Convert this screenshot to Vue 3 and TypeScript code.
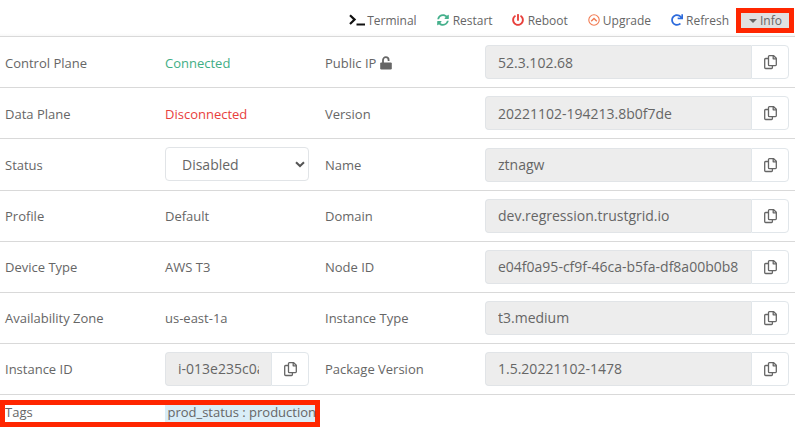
<script setup lang="ts">
interface Cell {
  label: string
  kind: 'text' | 'select' | 'copy'
  value: string
  tone?: 'ok' | 'bad'
  unlocked?: boolean
}

const actions = [
  { id: 'terminal', label: 'Terminal' },
  { id: 'restart', label: 'Restart' },
  { id: 'reboot', label: 'Reboot' },
  { id: 'upgrade', label: 'Upgrade' },
  { id: 'refresh', label: 'Refresh' },
]

const rows: Cell[][] = [
  [
    { label: 'Control Plane', kind: 'text', value: 'Connected', tone: 'ok' },
    { label: 'Public IP', kind: 'copy', value: '52.3.102.68', unlocked: true },
  ],
  [
    { label: 'Data Plane', kind: 'text', value: 'Disconnected', tone: 'bad' },
    { label: 'Version', kind: 'copy', value: '20221102-194213.8b0f7de' },
  ],
  [
    { label: 'Status', kind: 'select', value: 'Disabled' },
    { label: 'Name', kind: 'copy', value: 'ztnagw' },
  ],
  [
    { label: 'Profile', kind: 'text', value: 'Default' },
    { label: 'Domain', kind: 'copy', value: 'dev.regression.trustgrid.io' },
  ],
  [
    { label: 'Device Type', kind: 'text', value: 'AWS T3' },
    { label: 'Node ID', kind: 'copy', value: 'e04f0a95-cf9f-46ca-b5fa-df8a00b0b8' },
  ],
  [
    { label: 'Availability Zone', kind: 'text', value: 'us-east-1a' },
    { label: 'Instance Type', kind: 'copy', value: 't3.medium' },
  ],
  [
    { label: 'Instance ID', kind: 'copy', value: 'i-013e235c0a' },
    { label: 'Package Version', kind: 'copy', value: '1.5.20221102-1478' },
  ],
]
</script>

<template>
  <main class="panel">
    <header class="toolbar">
      <button v-for="a in actions" :key="a.id" class="action" :class="a.id">
        <svg v-if="a.id === 'terminal'" class="icon" width="17" height="14" viewBox="0 0 17 14">
          <path d="M1 2.200 5.600 6.600 1 11" fill="none" stroke="#111" stroke-width="2.200" />
          <path d="M7.500 11.500h8.500" stroke="#111" stroke-width="2" />
        </svg>
        <svg v-else-if="a.id === 'restart'" class="icon" width="12" height="12" viewBox="0 0 512 512" fill="#45b08c">
          <path d="M370.72 133.28C339.458 104.008 298.888 87.962 255.848 88c-77.458.068-144.328 53.178-162.791 126.85-1.344 5.363-6.122 9.15-11.651 9.15H24.103c-7.498 0-13.194-6.807-11.807-14.176C33.933 94.924 134.813 8 256 8c66.448 0 126.791 26.136 171.315 68.685L463.03 40.97C478.149 25.851 504 36.559 504 57.941V192c0 13.255-10.745 24-24 24H345.941c-21.382 0-32.09-25.851-16.971-40.971l41.75-41.749zM32 296h134.059c21.382 0 32.09 25.851 16.971 40.971l-41.75 41.75c31.262 29.273 71.835 45.319 114.876 45.28 77.418-.07 144.315-53.144 162.787-126.849 1.344-5.363 6.122-9.15 11.651-9.15h57.304c7.498 0 13.194 6.807 11.807 14.176C478.067 417.076 377.187 504 256 504c-66.448 0-126.791-26.136-171.315-68.685L48.97 471.03C33.851 486.149 8 475.441 8 454.059V320c0-13.255 10.745-24 24-24z" />
        </svg>
        <svg v-else-if="a.id === 'reboot'" class="icon" width="12" height="12" viewBox="0 0 512 512" fill="#e8403c">
          <path d="M400 54.1c63 45 104 118.6 104 201.9 0 136.8-110.8 247.7-247.5 248C120 504.3 8.2 393 8 256.4 7.9 173.1 48.9 99.3 111.8 54.2c11.7-8.3 28-4.8 35 7.7L162.6 90c5.900 10.500 3.100 23.800-6.600 31-41.500 30.800-68 79.600-68 134.900-.1 92.300 74.500 168.100 168 168.100 91.600 0 168.600-74.200 168-169.100-.3-51.800-24.700-101.800-68.100-134-9.700-7.200-12.400-20.500-6.500-30.900l15.800-28.100c7-12.400 23.200-16.100 34.800-7.800zM296 264V24c0-13.300-10.700-24-24-24h-32c-13.300 0-24 10.700-24 24v240c0 13.300 10.700 24 24 24h32c13.300 0 24-10.700 24-24z" />
        </svg>
        <svg v-else-if="a.id === 'upgrade'" class="icon" width="12" height="12" viewBox="0 0 12 12" fill="none" stroke="#f27b52">
          <circle cx="6" cy="6" r="5.2" stroke-width="1.1" />
          <path d="M3.2 7.300 6 4.500l2.800 2.800" stroke-width="1.400" />
        </svg>
        <svg v-else class="icon" width="12" height="12" viewBox="0 0 512 512" fill="#2d6bdc">
          <path d="M500 8h-47c-7 0-12.500 6-12 12.600l4 82.800C400 46 328 8 256 8 119 8 8 119 8 256s111 248 248 248c63 0 121-24 166-63 5-4 5.500-12.500.6-17.400l-34-34c-4.500-4.500-11.700-4.700-16.400-.6C343 414 302 431 256 431c-97 0-175-78-175-175S159 81 256 81c60 0 112 30 143 75l-102-5c-7-.3-12.600 5-12.600 12v47c0 6.600 5.400 12 12 12H500c6.600 0 12-5.400 12-12V20c0-6.600-5.400-12-12-12z" />
        </svg>
        <span class="caption">{{ a.label }}</span>
      </button>
      <button class="info">
        <i class="caret"></i>
        <span class="caption">Info</span>
      </button>
    </header>

    <section v-for="(row, i) in rows" :key="i" class="row" :class="{ lowered: i < 2, tall: i === 2 }">
      <template v-for="cell in row" :key="cell.label">
        <div class="label">
          {{ cell.label }}
          <svg v-if="cell.unlocked" class="lock" width="12" height="14" viewBox="0 0 12 14">
            <path d="M3 7V4a2.800 2.800 0 0 1 5.600 0v1.100" fill="none" stroke="#666" stroke-width="1.800" />
            <rect x=".2" y="6.400" width="11.600" height="7" rx="1.200" fill="#666" />
          </svg>
        </div>
        <div class="value" :class="[cell.tone, cell.kind]">
          <div v-if="cell.kind === 'copy'" class="group">
            <div class="field"><span class="clip">{{ cell.value }}</span></div>
            <button class="copy-button" aria-label="Copy">
              <svg width="13" height="15" viewBox="0 0 13 15" fill="none" stroke="#666" stroke-width="1.300" stroke-linejoin="round">
                <path d="M4.500 1.600a.9.900 0 0 1 .9-.9h4.300l2.600 2.600v6.400a.9.900 0 0 1-.9.900h-6a.9.900 0 0 1-.9-.9z" />
                <path d="M9.200.8v3h3" />
                <path d="M4.400 3.500H1.600a.9.900 0 0 0-.9.900v8.200a.9.900 0 0 0 .9.900h5.900a.9.900 0 0 0 .9-.9v-1.900" />
              </svg>
            </button>
          </div>
          <div v-else-if="cell.kind === 'select'" class="dropdown">
            <span>{{ cell.value }}</span>
            <svg width="10" height="7" viewBox="0 0 10 7">
              <path d="M1 1.200 5 5l4-3.800" fill="none" stroke="#555" stroke-width="2" />
            </svg>
          </div>
          <template v-else>{{ cell.value }}</template>
        </div>
      </template>
    </section>

    <footer class="tags">
      <div class="tagbox">
        <span class="tagname">Tags</span>
        <span class="tag">prod_status : production</span>
      </div>
    </footer>
  </main>
</template>

<style>
body {
  background: #fff;
}
</style>

<style scoped>
.panel {
  width: 795px;
  height: 429px;
  overflow: hidden;
  box-sizing: border-box;
  font-family: 'Open Sans', sans-serif;
  font-size: 13px;
  color: #666;
}
button {
  font: inherit;
  color: inherit;
  background: none;
  border: 0;
  padding: 0;
}
.toolbar {
  height: 36px;
  box-sizing: border-box;
  display: flex;
  align-items: flex-start;
  justify-content: flex-end;
  padding: 8px 1px 0 0;
  font-size: 12px;
  background: linear-gradient(#fff, #f8f8f8) bottom / 100% 3px no-repeat;
}
.action {
  display: flex;
  align-items: center;
  height: 24px;
  gap: 3px;
  margin-right: 20px;
}
.action.terminal {
  gap: 1px;
}
.action.restart {
  gap: 4px;
  margin-right: 19px;
}
.action.reboot {
  gap: 4px;
}
.action.refresh {
  margin-right: 7px;
}
.icon {
  display: block;
}
.info {
  width: 58px;
  height: 25px;
  box-sizing: border-box;
  border: 5px solid #ff2600;
  background: #e1e1e1;
  display: flex;
  align-items: center;
  padding-left: 8px;
  gap: 3px;
}
.caret {
  border: 4px solid transparent;
  border-top-color: #666;
  border-bottom: 0;
}
.row {
  display: grid;
  grid-template-columns: 160px 160px 160px 315px;
  align-items: start;
  height: 51px;
  box-sizing: border-box;
  border-top: 1px solid #d9d9d9;
  padding-top: 8px;
}
.tall {
  height: 52px;
}
.label,
.value {
  padding: 7px 0 0 5px;
  line-height: 20px;
}
.lowered .label,
.lowered .text,
.tall .label {
  padding-top: 8px;
}
.label {
  display: flex;
  align-items: center;
  gap: 4px;
}
.value.copy {
  padding: 0 6px 0 5px;
}
.value.select,
.value.copy:nth-child(2) {
  padding: 0 11px 0 5px;
}
.tall .value.copy {
  padding-top: 1px;
}
.ok {
  color: #3fae85;
}
.bad {
  color: #e8403c;
}
.group {
  display: flex;
  height: 34px;
  font-size: 14px;
}
.field {
  flex: 1;
  min-width: 0;
  box-sizing: border-box;
  border: 1px solid #e1e4e7;
  border-right: 0;
  border-radius: 4px 0 0 4px;
  background: #ededed;
  padding: 6px 12px;
}
.lowered .field {
  padding-top: 7px;
  padding-bottom: 5px;
}
.clip {
  display: block;
  overflow: hidden;
  white-space: nowrap;
}
.copy-button {
  width: 38px;
  box-sizing: border-box;
  border: 1px solid #e1e6ea;
  border-radius: 0 4px 4px 0;
  display: flex;
  align-items: center;
  justify-content: center;
}
.dropdown {
  height: 34px;
  box-sizing: border-box;
  border: 1px solid #e1e4e7;
  border-radius: 4px;
  display: flex;
  align-items: center;
  justify-content: space-between;
  padding: 1px 3px 0 16px;
  font-size: 14px;
}
.tags {
  border-top: 1px solid #d9d9d9;
  padding-top: 5px;
}
.tagbox {
  width: 320px;
  height: 27px;
  box-sizing: border-box;
  border: 5px solid #ff2600;
  display: grid;
  grid-template-columns: 160px 150px;
  line-height: 15px;
}
.tag {
  height: 17px;
  background: #d9edf7;
  padding-left: 2.5px;
  letter-spacing: -0.01px;
  white-space: nowrap;
}
</style>
